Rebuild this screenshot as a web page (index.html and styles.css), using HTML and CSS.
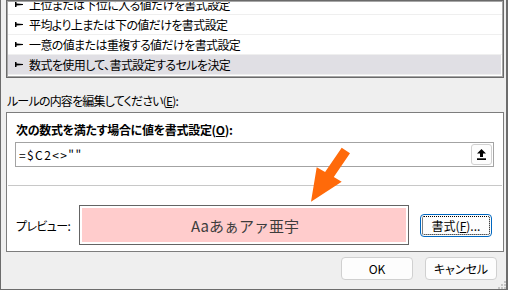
FILE: index.html
```html
<!DOCTYPE html>
<html lang="ja">
<head>
<meta charset="utf-8">
<link rel="stylesheet" href="styles.css">
</head>
<body>
<div class="dialog">
  <div class="rulelist">
    <div class="viewport">
      <div class="rows">
        <div class="row"><svg class="bullet" width="8" height="5" viewBox="0 0 8 5"><polygon points="0,0 1.5,0 1.5,1.5 8,2 8,3 1.5,3.5 1.5,5 0,5" fill="#000"/></svg><span>上位または下位に入る値だけを書式設定</span></div>
        <div class="row"><svg class="bullet" width="8" height="5" viewBox="0 0 8 5"><polygon points="0,0 1.5,0 1.5,1.5 8,2 8,3 1.5,3.5 1.5,5 0,5" fill="#000"/></svg><span>平均より上または下の値だけを書式設定</span></div>
        <div class="row"><svg class="bullet" width="8" height="5" viewBox="0 0 8 5"><polygon points="0,0 1.5,0 1.5,1.5 8,2 8,3 1.5,3.5 1.5,5 0,5" fill="#000"/></svg><span>一意の値または重複する値だけを書式設定</span></div>
        <div class="row sel"><svg class="bullet" width="8" height="5" viewBox="0 0 8 5"><polygon points="0,0 1.5,0 1.5,1.5 8,2 8,3 1.5,3.5 1.5,5 0,5" fill="#000"/></svg><span>数式を使用して、書式設定するセルを決定</span></div>
      </div>
    </div>
  </div>

  <div class="label">ルールの内容を編集してください(<u>E</u>):</div>

  <div class="panel">
    <div class="bold">次の数式を満たす場合に値を書式設定(<u>O</u>):</div>
    <div class="formula">
      <span class="ftext">=$C2&lt;&gt;""</span>
      <button class="collapse" type="button"><svg width="9" height="11" viewBox="0 0 9 11"><polygon points="4.5,0 9,4.5 6,4.5 6,8 3,8 3,4.5 0,4.5" fill="#000"/><rect x="0" y="9.3" width="9" height="1.7" fill="#000"/></svg></button>
    </div>
    <div class="sep"></div>
    <div class="preview-row">
      <span class="plabel">プレビュー:</span>
      <div class="preview"><div class="sample">Aaあぁアァ亜宇</div></div>
      <button class="fmt" type="button"><span class="focus">書式(<u>F</u>)...</span></button>
    </div>
  </div>

  <div class="actions">
    <button class="btn" type="button">OK</button>
    <button class="btn" type="button">キャンセル</button>
  </div>

  <svg class="grip" width="8" height="8" viewBox="0 0 8 8">
    <rect x="6" y="0" width="2" height="2" fill="#c4c4c4"/>
    <rect x="3" y="3" width="2" height="2" fill="#c4c4c4"/>
    <rect x="6" y="3" width="2" height="2" fill="#c4c4c4"/>
    <rect x="0" y="6" width="2" height="2" fill="#c4c4c4"/>
    <rect x="3" y="6" width="2" height="2" fill="#c4c4c4"/>
    <rect x="6" y="6" width="2" height="2" fill="#c4c4c4"/>
  </svg>

  <svg class="arrow" width="44" height="60" viewBox="309 145 44 60">
    <polygon points="341.7,147.7 350,153.3 333.8,177.1 341.7,181.7 311,201.7 316.7,167.3 325.1,172.1" fill="#ff6a0a"/>
  </svg>
</div>
</body>
</html>
```

FILE: styles.css
```css
* {
  box-sizing: border-box;
  margin: 0;
  padding: 0;
}

html, body {
  width: 508px;
  height: 290px;
  overflow: hidden;
}

body {
  font-family: "Noto Sans CJK JP", "Noto Sans", sans-serif;
  font-size: 12px;
  color: #000;
  background: #efefef;
  font-feature-settings: "palt";
  letter-spacing: -0.6px;
}

.dialog {
  position: relative;
  width: 508px;
  height: 290px;
  border-left: 1px solid #6c6c6c;
  border-right: 2px solid #6c6c6c;
  border-bottom: 1px solid #6c6c6c;
  background: #efefef;
  padding: 0 2px 0 5px;
}

u {
  text-decoration: underline;
  text-underline-offset: 1px;
}

/* rule type list */
.rulelist {
  height: 78px;
  border: 1px solid #6a6a6a;
  padding: 1px;
  background: #fff;
  box-shadow: inset 0 0 0 1px #a6a6a6;
}

.viewport {
  height: 100%;
  overflow: hidden;
}

.rows {
  margin-top: -7px;
}

.row {
  display: flex;
  align-items: center;
  height: 20px;
  border-bottom: 1px solid #efefef;
  padding-left: 7px;
  line-height: 16px;
  white-space: nowrap;
}

.row.sel {
  background: #e0dfe4;
  margin-right: 1px;
}

.bullet {
  flex: none;
  margin-right: 6px;
}

/* label */
.label {
  margin-top: 15px;
  height: 16px;
  line-height: 16px;
  margin-bottom: 3px;
  padding-left: 1px;
  white-space: nowrap;
  letter-spacing: -0.8px;
}

/* edit panel */
.panel {
  height: 140px;
  border: 1px solid #7d7d7d;
  background: #fff;
  padding: 9px 9px 0 8px;
}

.bold {
  font-weight: bold;
  line-height: 16px;
  height: 16px;
  margin-left: 1px;
  white-space: nowrap;
  letter-spacing: -0.3px;
}

.formula {
  margin-top: 4px;
  height: 25px;
  border: 1px solid #a3a3a3;
  display: flex;
  align-items: center;
  padding: 0 1px 0 3px;
}

.ftext {
  letter-spacing: 1.4px;
  font-feature-settings: normal;
}

.collapse {
  margin-left: auto;
  width: 21px;
  height: 21px;
  border: 1px solid #d0d0d0;
  border-radius: 3px;
  background: #fdfdfd;
  display: flex;
  align-items: center;
  justify-content: center;
}

.sep {
  margin-top: 18px;
  height: 1px;
  background: #c8c8c8;
  margin-left: -7px;
  margin-right: -8px;
}

.preview-row {
  margin-top: 19px;
  height: 40px;
  display: flex;
  align-items: center;
}

.plabel {
  width: 64px;
  padding-left: 1px;
  flex: none;
}

.preview {
  width: 330px;
  height: 40px;
  border: 1px solid #646464;
  padding: 2px;
  background: #fff;
  flex: none;
}

.sample {
  height: 100%;
  background: #ffcccc;
  display: flex;
  align-items: center;
  justify-content: center;
  font-size: 15px;
  color: #3c3c3c;
  letter-spacing: 0;
  font-feature-settings: normal;
  padding-left: 2px;
}

.fmt {
  margin-left: 11px;
  width: 72px;
  height: 23px;
  border: 1px solid #0067c0;
  border-radius: 4px;
  background: #fdfdfd;
  padding: 1px;
  font: inherit;
  color: #000;
  flex: none;
}

.focus {
  display: flex;
  align-items: center;
  justify-content: center;
  width: 100%;
  height: 100%;
  border: 1px dotted #000;
  border-radius: 2px;
}

/* bottom buttons */
.actions {
  margin-top: 5px;
  display: flex;
  justify-content: flex-end;
  gap: 12px;
  padding-right: 7px;
}

.btn {
  width: 72px;
  height: 23px;
  border: 1px solid #d0d0d0;
  border-radius: 4px;
  background: #fdfdfd;
  font: inherit;
  color: #000;
}

.grip {
  position: absolute;
  right: 0;
  bottom: 0;
}

.arrow {
  position: absolute;
  left: 308px;
  top: 145px;
}
```
